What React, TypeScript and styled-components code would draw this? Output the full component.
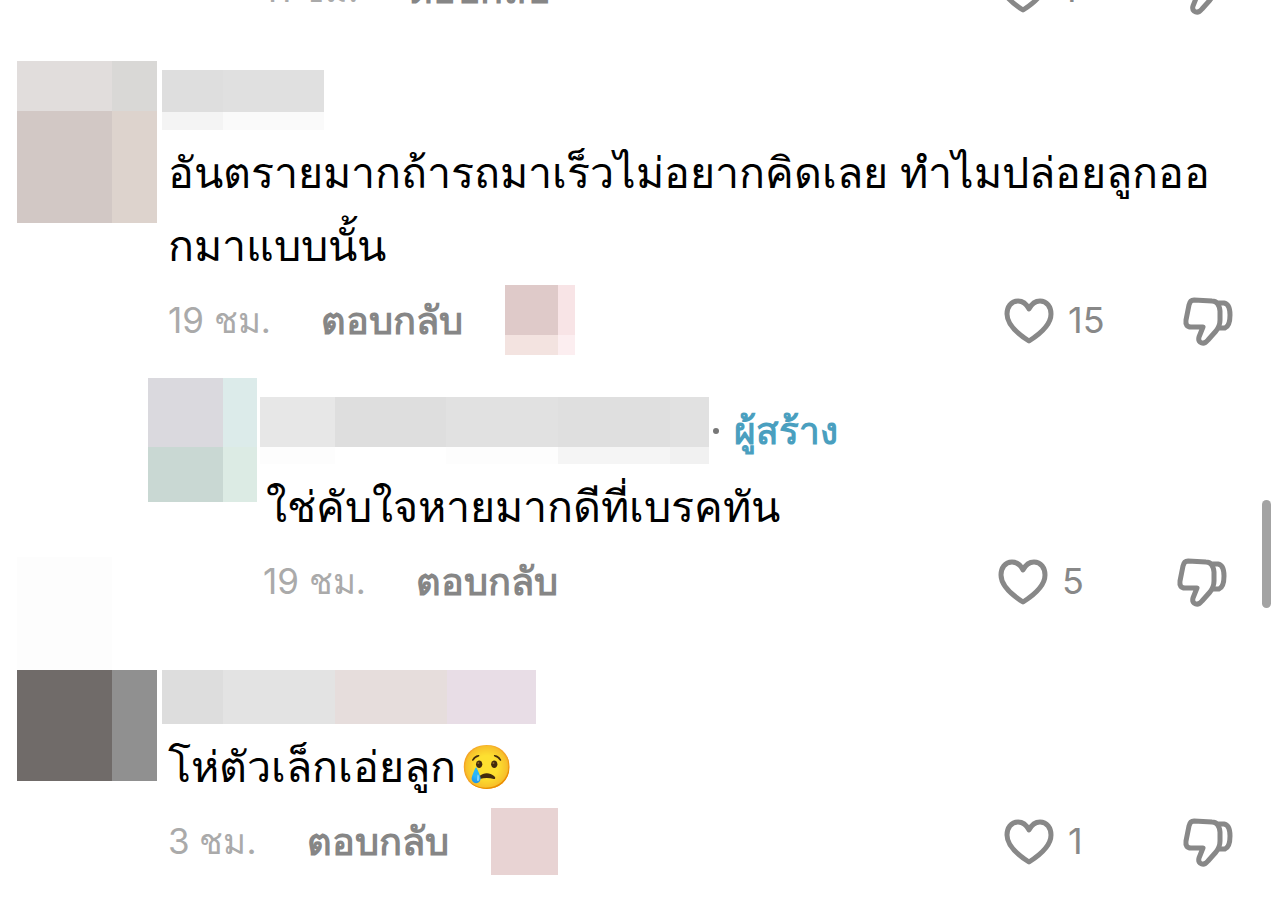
import React from "react";
import styled, { createGlobalStyle } from "styled-components";

const GlobalStyle = createGlobalStyle`
  * { box-sizing: border-box; }
  body {
    margin: 0;
    background: #fff;
    font-family: Inter, "Liberation Sans", sans-serif;
    overflow-x: hidden;
  }
  button {
    border: 0;
    padding: 0;
    background: none;
    font: inherit;
    color: inherit;
    cursor: pointer;
  }
`;

const Thread = styled.main`
  display: flex;
  flex-direction: column;
  overflow: hidden;
  padding-bottom: 31px;
`;

const Comment = styled.article<{ $nested?: boolean; $space: number }>`
  display: flex;
  align-items: flex-start;
  gap: ${(p) => (p.$nested ? 3 : 5)}px;
  padding-left: ${(p) => (p.$nested ? 148 : 17)}px;
  padding-right: ${(p) => (p.$nested ? 53 : 47)}px;
  margin-top: ${(p) => p.$space}px;
`;

const AvatarSlot = styled.div<{ $width: number; $rise?: number }>`
  flex: none;
  width: ${(p) => p.$width}px;
  margin-top: ${(p) => -(p.$rise || 0)}px;
`;

const Content = styled.div<{ $inset?: number }>`
  flex: 1;
  min-width: 0;
  padding-top: ${(p) => p.$inset || 0}px;
`;

const NameRow = styled.header`
  display: flex;
  align-items: center;
  gap: 4px;
`;

const Dot = styled.span`
  width: 6px;
  height: 6px;
  border-radius: 50%;
  background: #777;
`;

const CreatorTag = styled.span`
  margin-left: 11px;
  font-size: 37px;
  line-height: 56px;
  font-weight: 700;
  color: #4a9fbf;
`;

const Text = styled.p`
  margin: 6px 0 3px;
  padding-left: 6px;
  font-size: 43px;
  line-height: 73px;
  color: #000;
  white-space: pre-line;
`;

const Emoji = styled.span`
  margin-left: 4px;
`;

const Footer = styled.footer<{ $nested?: boolean }>`
  display: flex;
  align-items: center;
  height: 70px;
  padding-left: ${(p) => (p.$nested ? 3 : 6)}px;
  font-size: 36px;
  line-height: 48px;
`;

const Time = styled.time`
  font-size: 35px;
  color: #aaa;
  white-space: nowrap;
`;

const Reply = styled.button`
  && {
    margin: 0 42px 0 50px;
    font-size: 38px;
    font-weight: 700;
    color: #868686;
    white-space: nowrap;
  }
`;

const Like = styled.button`
  && {
    display: flex;
    align-items: center;
    gap: 14px;
    width: 179px;
    margin-left: auto;
    color: #888;
  }
`;

const Dislike = styled.button`
  && {
    display: flex;
    color: #888;
  }
`;

const Icon = styled.svg`
  flex: none;
  width: 50px;
  height: 50px;
  fill: none;
  stroke: #888;
  stroke-width: 5;
  stroke-linejoin: round;
  stroke-linecap: round;
  overflow: visible;
`;

const MosaicGrid = styled.div<{ $cols: number[]; $rows: number[] }>`
  display: grid;
  flex: none;
  grid-template-columns: ${(p) => p.$cols.map((c) => `${c}px`).join(" ")};
  grid-template-rows: ${(p) => p.$rows.map((r) => `${r}px`).join(" ")};
`;

const Cell = styled.span<{ $color: string }>`
  background: ${(p) => p.$color};
`;

const ScrollThumb = styled.div`
  position: fixed;
  top: 500px;
  right: 9px;
  width: 9px;
  height: 108px;
  border-radius: 5px;
  background: #a3a3a3;
`;

type MosaicProps = { cols: number[]; rows: number[]; colors: string[] };

const Mosaic = ({ cols, rows, colors }: MosaicProps) => (
  <MosaicGrid $cols={cols} $rows={rows} aria-hidden="true">
    {colors.map((c, i) => (
      <Cell key={i} $color={c} />
    ))}
  </MosaicGrid>
);

type ActionsProps = {
  time: string;
  likes: number;
  nested?: boolean;
  children?: React.ReactNode;
};

const Actions = ({ time, likes, nested, children }: ActionsProps) => (
  <Footer $nested={nested}>
    <Time>{time}</Time>
    <Reply type="button">ตอบกลับ</Reply>
    {children}
    <Like type="button">
      <Icon viewBox="0 -1 50 50" aria-hidden="true">
        <path d="M25 13C22 7 18 5 14 5C7 5 3 11 3 18C3 29 14 38 25 45C36 38 47 29 47 18C47 11 43 5 36 5C32 5 28 7 25 13Z" />
      </Icon>
      {likes}
    </Like>
    <Dislike type="button" aria-label="ไม่ชอบ">
      <Icon viewBox="0 -2 50 50" aria-hidden="true">
        <path d="M11 3L29 4Q36 4 37 14V23Q37 29 33 34L25 43Q21 48 17 45Q15 43 16 40L20 30H8Q2 30 3 23L6 8Q7 3 11 3Z" />
        <path d="M36 6H41Q47 7 47 18Q47 29 42 31H37" />
      </Icon>
    </Dislike>
  </Footer>
);

export default function App() {
  return (
    <>
      <GlobalStyle />
      <Thread>
        <Comment $nested $space={-46}>
          <AvatarSlot $width={109} />
          <Content>
            <Actions time="11 ชม." likes={1} nested />
          </Content>
        </Comment>

        <Comment $space={37}>
          <AvatarSlot $width={140}>
            <Mosaic cols={[95, 45]} rows={[50, 112]} colors={["#e1dddc", "#d9d8d6", "#d2c8c5", "#ddd3cd"]} />
          </AvatarSlot>
          <Content $inset={9}>
            <NameRow>
              <Mosaic cols={[61, 101]} rows={[42, 18]} colors={["#dedede", "#e0e0e0", "#f4f4f4", "#fafafa"]} />
            </NameRow>
            <Text>{"อันตรายมากถ้ารถมาเร็วไม่อยากคิดเลย ทำไมปล่อยลูกออ\nกมาแบบนั้น"}</Text>
            <Actions time="19 ชม." likes={15}>
              <Mosaic cols={[53, 17]} rows={[50, 20]} colors={["#dfcac9", "#f8e4e6", "#f3e3e0", "#fceef0"]} />
            </Actions>
          </Content>
        </Comment>

        <Comment $nested $space={23}>
          <AvatarSlot $width={109}>
            <Mosaic cols={[75, 34]} rows={[69, 55]} colors={["#dad9de", "#dcebea", "#c9d8d3", "#dcebe4"]} />
          </AvatarSlot>
          <Content $inset={19}>
            <NameRow>
              <Mosaic
                cols={[75, 111, 112, 112, 39]}
                rows={[50, 17]}
                colors={[
                  "#e7e7e7", "#dedede", "#e1e1e1", "#dfdfdf", "#e1e1e1",
                  "#fdfdfd", "#ffffff", "#fdfdfd", "#f5f5f5", "#f1f1f1",
                ]}
              />
              <Dot />
              <CreatorTag>ผู้สร้าง</CreatorTag>
            </NameRow>
            <Text>ใช่คับใจหายมากดีที่เบรคทัน</Text>
            <Actions time="19 ชม." likes={5} nested />
          </Content>
        </Comment>

        <Comment $space={54}>
          <AvatarSlot $width={140} $rise={113}>
            <Mosaic cols={[95, 45]} rows={[113, 111]} colors={["#fdfdfd", "#ffffff", "#706b69", "#909090"]} />
          </AvatarSlot>
          <Content>
            <NameRow>
              <Mosaic cols={[61, 112, 112, 89]} rows={[54]} colors={["#dddddd", "#e3e3e3", "#e6dddc", "#e8dde6"]} />
            </NameRow>
            <Text>
              โห่ตัวเล็กเอ่ยลูก<Emoji>😢</Emoji>
            </Text>
            <Actions time="3 ชม." likes={1}>
              <Mosaic cols={[67]} rows={[67]} colors={["#e8d3d3"]} />
            </Actions>
          </Content>
        </Comment>
      </Thread>
      <ScrollThumb />
    </>
  );
}
